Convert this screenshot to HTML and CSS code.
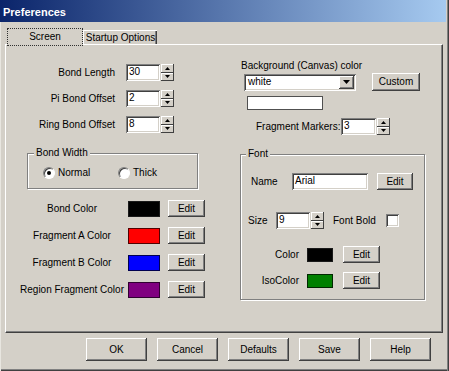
FILE: index.html
```html
<!DOCTYPE html>
<html>
<head>
<meta charset="utf-8">
<title>Preferences</title>
<link rel="stylesheet" href="styles.css">
</head>
<body>
<div class="window">
  <div class="titlebar">Preferences</div>
  <div class="client">
    <div class="tabs">
      <div class="tab active">Screen</div>
      <div class="tab">Startup Options</div>
    </div>
    <div class="panel">
      <div class="col-left">
        <div class="spin-row">
          <span class="lbl">Bond Length</span>
          <span class="field w34">30</span>
          <span class="spin">
            <span class="spin-btn"><svg width="5" height="3" viewBox="0 0 5 3"><polygon points="2.5,0 5,3 0,3" fill="#000"/></svg></span>
            <span class="spin-btn"><svg width="5" height="3" viewBox="0 0 5 3"><polygon points="0,0 5,0 2.5,3" fill="#000"/></svg></span>
          </span>
        </div>
        <div class="spin-row">
          <span class="lbl">Pi Bond Offset</span>
          <span class="field w34">2</span>
          <span class="spin">
            <span class="spin-btn"><svg width="5" height="3" viewBox="0 0 5 3"><polygon points="2.5,0 5,3 0,3" fill="#000"/></svg></span>
            <span class="spin-btn"><svg width="5" height="3" viewBox="0 0 5 3"><polygon points="0,0 5,0 2.5,3" fill="#000"/></svg></span>
          </span>
        </div>
        <div class="spin-row">
          <span class="lbl">Ring Bond Offset</span>
          <span class="field w34">8</span>
          <span class="spin">
            <span class="spin-btn"><svg width="5" height="3" viewBox="0 0 5 3"><polygon points="2.5,0 5,3 0,3" fill="#000"/></svg></span>
            <span class="spin-btn"><svg width="5" height="3" viewBox="0 0 5 3"><polygon points="0,0 5,0 2.5,3" fill="#000"/></svg></span>
          </span>
        </div>

        <fieldset class="group bondwidth">
          <legend>Bond Width</legend>
          <div class="radios">
            <span class="radio-opt opt-normal"><span class="radio checked"></span>Normal</span>
            <span class="radio-opt"><span class="radio"></span>Thick</span>
          </div>
        </fieldset>

        <div class="color-rows">
          <div class="color-row">
            <span class="lbl">Bond Color</span>
            <span class="swatch sw-black"></span>
            <span class="btn edit">Edit</span>
          </div>
          <div class="color-row">
            <span class="lbl">Fragment A Color</span>
            <span class="swatch sw-red"></span>
            <span class="btn edit">Edit</span>
          </div>
          <div class="color-row">
            <span class="lbl">Fragment B Color</span>
            <span class="swatch sw-blue"></span>
            <span class="btn edit">Edit</span>
          </div>
          <div class="color-row">
            <span class="lbl">Region Fragment Color</span>
            <span class="swatch sw-purple"></span>
            <span class="btn edit">Edit</span>
          </div>
        </div>
      </div>

      <div class="col-right">
        <div class="caption">Background (Canvas) color</div>
        <div class="select-row">
          <span class="select">
            <span class="select-text">white</span>
            <span class="drop-btn"><svg width="7" height="4" viewBox="0 0 7 4"><polygon points="0,0 7,0 3.5,4" fill="#000"/></svg></span>
          </span>
          <span class="btn custom">Custom</span>
        </div>
        <div class="preview"></div>
        <div class="fm-row">
          <span class="fm-lbl">Fragment Markers:</span>
          <span class="field w35">3</span>
          <span class="spin">
            <span class="spin-btn"><svg width="5" height="3" viewBox="0 0 5 3"><polygon points="2.5,0 5,3 0,3" fill="#000"/></svg></span>
            <span class="spin-btn"><svg width="5" height="3" viewBox="0 0 5 3"><polygon points="0,0 5,0 2.5,3" fill="#000"/></svg></span>
          </span>
        </div>

        <fieldset class="group fontgroup">
          <legend>Font</legend>
          <div class="name-row">
            <span class="name-lbl">Name</span>
            <span class="field w76">Arial</span>
            <span class="btn edit name-edit">Edit</span>
          </div>
          <div class="size-row">
            <span class="size-lbl">Size</span>
            <span class="field w34">9</span>
            <span class="spin">
              <span class="spin-btn"><svg width="5" height="3" viewBox="0 0 5 3"><polygon points="2.5,0 5,3 0,3" fill="#000"/></svg></span>
              <span class="spin-btn"><svg width="5" height="3" viewBox="0 0 5 3"><polygon points="0,0 5,0 2.5,3" fill="#000"/></svg></span>
            </span>
            <span class="bold-lbl">Font Bold</span>
            <span class="checkbox"></span>
          </div>
          <div class="fcolor-row first">
            <span class="fc-lbl">Color</span>
            <span class="swatch small sw-black"></span>
            <span class="btn edit fc-edit">Edit</span>
          </div>
          <div class="fcolor-row second">
            <span class="fc-lbl">IsoColor</span>
            <span class="swatch small sw-green"></span>
            <span class="btn edit fc-edit">Edit</span>
          </div>
        </fieldset>
      </div>
    </div>

    <div class="buttons">
      <span class="btn dlg">OK</span>
      <span class="btn dlg">Cancel</span>
      <span class="btn dlg">Defaults</span>
      <span class="btn dlg">Save</span>
      <span class="btn dlg">Help</span>
    </div>
  </div>
</div>
</body>
</html>
```

FILE: styles.css
```css
* { box-sizing: border-box; }
html, body { margin: 0; padding: 0; }
body {
  font-family: "Liberation Sans", Arial, sans-serif;
  font-size: 10px;
  line-height: 12px;
  color: #000;
  background: #d4d0c8;
}

.window {
  width: 449px;
  height: 371px;
  background: #d4d0c8;
  display: flex;
  flex-direction: column;
  box-shadow: inset 1px 0 #e8e6e0, inset -1px 0 #404040, inset -2px 0 #808080,
              inset 0 -1px #404040, inset 0 -2px #808080;
}

.titlebar {
  height: 22px;
  margin-right: 3px;
  padding: 6px 0 0 3px;
  background: linear-gradient(to right, #0a246a, #a6caf0);
  color: #fff;
  font-weight: bold;
  font-size: 11px;
  line-height: 13px;
}

.client {
  flex: 1;
  display: flex;
  flex-direction: column;
  padding: 6px 0 0 5px;
}

/* tabs */
.tabs {
  display: flex;
  align-items: flex-end;
  height: 16px;
  margin-left: 2px;
}
.tab {
  display: flex;
  align-items: center;
  justify-content: center;
  background: #d4d0c8;
}
.tab.active {
  position: relative;
  z-index: 1;
  width: 76px;
  height: 18px;
  margin-bottom: -2px;
  border: 1px dotted #303030;
}
.tab:not(.active) {
  width: 74px;
  height: 14px;
  border-top: 1px solid #fff;
  border-left: 1px solid #fff;
  box-shadow: inset -1px 0 #404040, inset -2px 0 #808080;
}

/* panel */
.panel {
  width: 438px;
  height: 289px;
  display: grid;
  grid-template-columns: 226px 1fr;
  align-items: start;
  border-top: 1px solid #fff;
  border-left: 1px solid #fff;
  border-right: 1px solid #404040;
  border-bottom: 1px solid #404040;
  box-shadow: inset -1px -1px #808080;
}

.col-left { padding-top: 19px; }
.col-right { padding-top: 15px; }

/* common controls */
.field {
  height: 17px;
  display: flex;
  align-items: center;
  padding: 0 3px 1px;
  background: #fff;
  box-shadow: inset 1px 1px #808080, inset -1px -1px #fff,
              inset 2px 2px #404040, inset -2px -2px #d4d0c8;
}
.w34 { width: 34px; }
.w35 { width: 35px; }
.w76 { width: 76px; }

.spin {
  display: flex;
  flex-direction: column;
  width: 13px;
  height: 17px;
  margin-left: 1px;
}
.spin-btn {
  flex: 1;
  display: flex;
  align-items: center;
  justify-content: center;
  background: #d4d0c8;
  box-shadow: inset -1px -1px #404040, inset 1px 1px #fff;
}
.spin-btn svg { display: block; }

.btn {
  display: flex;
  align-items: center;
  justify-content: center;
  background: #d4d0c8;
  box-shadow: inset -1px -1px #404040, inset 1px 1px #fff, inset -2px -2px #808080;
}

.swatch {
  width: 32px;
  height: 16px;
  border: 1px solid #1a1a1a;
}
.swatch.small { width: 26px; height: 14px; }
.sw-black { background: #000; }
.sw-red { background: #ff0000; border-color: #500000; }
.sw-blue { background: #0000ff; border-color: #000050; }
.sw-purple { background: #800080; border-color: #300030; }
.sw-green { background: #008000; border-color: #002800; }

.group {
  margin: 0;
  padding: 0;
  min-inline-size: 0;
  border: 1px solid #808080;
  box-shadow: inset 1px 1px #fff, 1px 1px #fff;
}
.group legend {
  padding: 0 2px;
  line-height: 12px;
  background: #d4d0c8;
}

/* left column */
.spin-row {
  display: flex;
  align-items: center;
  height: 17px;
  margin-bottom: 9px;
}
.spin-row .lbl {
  width: 109px;
  margin-right: 11px;
  text-align: right;
}

.bondwidth {
  width: 171px;
  height: 42px;
  margin: 14px 0 0 21px;
}
.bondwidth legend { margin-left: 6px; }
.radios {
  display: flex;
  align-items: center;
  height: 12px;
  margin-top: 8px;
  padding-left: 15px;
}
.radio-opt {
  display: flex;
  align-items: center;
  gap: 3px;
}
.opt-normal { width: 75px; }
.radio {
  width: 12px;
  height: 12px;
  border-radius: 50%;
  background: #fff;
  border: 1px solid;
  border-color: #808080 #fff #fff #808080;
  box-shadow: inset 1px 1px #404040;
  display: flex;
  align-items: center;
  justify-content: center;
}
.radio.checked::after {
  content: "";
  width: 4px;
  height: 4px;
  border-radius: 50%;
  background: #000;
}

.color-rows {
  display: flex;
  flex-direction: column;
  gap: 10px;
  margin-top: 11px;
}
.color-row {
  display: flex;
  align-items: center;
  height: 17px;
}
.color-row .lbl {
  width: 112px;
  margin-left: 10px;
  text-align: center;
  white-space: nowrap;
}
.edit { width: 37px; height: 17px; }
.color-row .edit { margin-left: 8px; }

/* right column */
.caption { margin-left: 9px; }
.select-row {
  display: flex;
  align-items: center;
  height: 18px;
  margin: 1px 0 0 12px;
}
.select {
  width: 112px;
  height: 17px;
  display: flex;
  align-items: center;
  justify-content: space-between;
  padding: 2px;
  background: #fff;
  box-shadow: inset 1px 1px #808080, inset -1px -1px #fff,
              inset 2px 2px #404040, inset -2px -2px #d4d0c8;
}
.select-text { padding-left: 2px; }
.drop-btn {
  width: 15px;
  height: 13px;
  display: flex;
  align-items: center;
  justify-content: center;
  background: #d4d0c8;
  box-shadow: inset -1px -1px #404040, inset 1px 1px #fff, inset -2px -2px #808080;
}
.drop-btn svg { display: block; }
.custom { width: 48px; height: 18px; margin-left: 16px; }

.preview {
  width: 76px;
  height: 14px;
  margin: 5px 0 0 15px;
  background: #fff;
  border: 1px solid #505050;
}

.fm-row {
  display: flex;
  align-items: center;
  height: 17px;
  margin: 8px 0 0 24px;
}
.fm-lbl { width: 85px; white-space: nowrap; }

.fontgroup {
  width: 185px;
  height: 152px;
  margin: 13px 0 0 8px;
}
.fontgroup legend { margin-left: 5px; }

.name-row {
  display: flex;
  align-items: center;
  height: 17px;
  margin-top: 13px;
  padding-left: 10px;
}
.name-lbl { width: 41px; }
.name-edit { width: 36px; margin-left: 9px; }

.size-row {
  display: flex;
  align-items: center;
  height: 17px;
  margin-top: 22px;
  padding-left: 7px;
}
.size-lbl { width: 28px; }
.bold-lbl { width: 53px; margin-left: 9px; }
.checkbox {
  width: 13px;
  height: 13px;
  background: #fff;
  box-shadow: inset 1px 1px #808080, inset -1px -1px #fff,
              inset 2px 2px #404040, inset -2px -2px #d4d0c8;
}

.fcolor-row {
  display: flex;
  align-items: center;
  height: 17px;
}
.fcolor-row.first { margin-top: 17px; }
.fcolor-row.second { margin-top: 9px; }
.fc-lbl { width: 59px; padding-right: 1px; text-align: right; }
.fcolor-row .swatch { margin-left: 7px; }
.fc-edit { margin-left: 10px; }

/* bottom buttons */
.buttons {
  display: flex;
  gap: 10px;
  margin-top: 5px;
  padding-left: 81px;
}
.dlg { width: 61px; height: 23px; }
```
